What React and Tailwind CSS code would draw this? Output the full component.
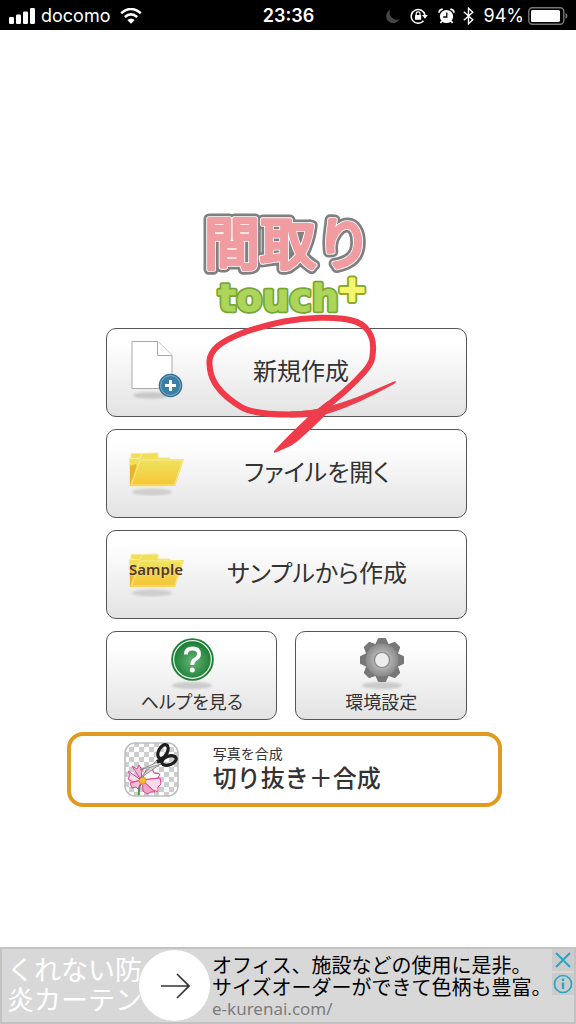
import React from "react";

const JP = "font-['Noto_Sans_CJK_JP',sans-serif]";
const PANEL =
  "rounded-[10px] border border-[#555555] bg-linear-to-b from-white from-15% to-[#e4e3e3] text-[#333333]";

function StatusBar() {
  return (
    <header className="grid h-[30px] grid-cols-[1fr_auto_1fr] items-center bg-black pt-[2px] pr-2 pl-[9px] font-['Inter',sans-serif] text-white">
      <div className="flex items-center gap-[6px]">
        <svg width="26" height="16" viewBox="0 0 26 16" fill="white" aria-label="Signal">
          <rect x="0" y="9" width="5" height="7" rx="1.2" />
          <rect x="7" y="6.500" width="5" height="9.500" rx="1.2" />
          <rect x="14" y="3.500" width="5" height="12.500" rx="1.2" />
          <rect x="21" y="0" width="5" height="16" rx="1.2" />
        </svg>
        <span className="text-lg leading-6">docomo</span>
        <svg className="ml-1" width="22" height="16" viewBox="0 0 22 16" aria-label="Wi-Fi">
          <path d="M1.200 5.200Q11-3.200 20.800 5.200" fill="none" stroke="white" strokeWidth="2.600" />
          <path d="M4.800 9Q11 3.600 17.200 9" fill="none" stroke="white" strokeWidth="2.600" />
          <path d="M11 15.800L7.300 12Q11 8.800 14.700 12Z" fill="white" />
        </svg>
      </div>
      <time className="text-lg leading-6 font-semibold">23:36</time>
      <div className="flex items-center justify-end">
        <svg className="mr-[10px]" width="15" height="15" viewBox="0 0 15 15" aria-label="Do not disturb">
          <path d="M5.200.8A7 7 0 1 0 14.400 10.300A7.200 7.200 0 0 1 5.200.8Z" fill="#454545" />
        </svg>
        <svg className="mr-[10px]" width="18" height="16" viewBox="0 0 18 16" aria-label="Rotation lock">
          <path d="M13.500 12.700A6.900 6.900 0 1 1 14.900 7" fill="none" stroke="white" strokeWidth="1.500" />
          <path d="M12 7h5.800L14.900 10.800Z" fill="white" />
          <rect x="5" y="7" width="6.200" height="4.800" rx=".6" fill="white" />
          <path d="M6.200 7.500V5.800a1.900 1.900 0 0 1 3.800 0v1.700" fill="none" stroke="white" strokeWidth="1.200" />
        </svg>
        <svg className="mr-2" width="17" height="16" viewBox="0 0 17 16" aria-label="Alarm">
          <circle cx="8.500" cy="8.500" r="6.600" fill="white" />
          <path d="M1 4.600Q1.300 1.500 4.700 1.100M12.300 1.100Q15.700 1.500 16 4.600" fill="none" stroke="white" strokeWidth="1.700" />
          <path d="M3.800 13l-1.300 2M13.200 13l1.300 2" stroke="white" strokeWidth="1.600" />
          <path d="M8.800 4.500V9H5.200" fill="none" stroke="black" strokeWidth="1.300" />
        </svg>
        <svg className="mr-[10px]" width="11" height="18" viewBox="0 0 11 18" aria-label="Bluetooth">
          <path d="M.8 4.800L9.800 12.800L5.500 16.800V1.200L9.800 5.200L.8 13.200" fill="none" stroke="white" strokeWidth="1.400" />
        </svg>
        <span className="mr-1 text-lg leading-6">94%</span>
        <svg width="40" height="18" viewBox="0 0 40 18" aria-label="Battery">
          <rect x=".8" y=".8" width="35" height="16.400" rx="3.500" fill="none" stroke="#777" strokeWidth="1.400" />
          <rect x="3" y="3" width="29" height="12" rx="1.500" fill="white" />
          <path d="M37.500 6q2 1 2 3t-2 3z" fill="#777" />
        </svg>
      </div>
    </header>
  );
}

function Logo() {
  return (
    <h1>
      <svg width="176" height="118" viewBox="198 204 176 118">
        <defs>
          <text id="logo-name" x="203" y="264" fontSize="56" fontWeight="400" className={JP}>
            間取り
          </text>
          <text id="logo-touch" x="217" y="311" fontSize="38" fontWeight="700" className="font-['DejaVu_Sans',sans-serif]">
            touch
          </text>
          <text id="logo-plus" x="336" y="301" fontSize="36" fontWeight="700" className="font-['DejaVu_Sans',sans-serif]">
            +
          </text>
        </defs>
        <g strokeLinejoin="round" strokeLinecap="round">
          <use href="#logo-name" fill="#808080" stroke="#808080" strokeWidth="11" />
          <use href="#logo-name" fill="#fff" stroke="#fff" strokeWidth="5.500" />
          <use href="#logo-name" fill="#f09ca0" stroke="#f09ca0" strokeWidth="3.800" />
          <use href="#logo-touch" fill="#75a536" stroke="#75a536" strokeWidth="4.400" />
          <use href="#logo-touch" fill="#add55a" stroke="#add55a" strokeWidth="1" />
          <use href="#logo-plus" fill="#8cab2b" stroke="#8cab2b" strokeWidth="6" />
          <use href="#logo-plus" fill="#f7f56b" stroke="#f7f56b" strokeWidth="2" />
        </g>
      </svg>
    </h1>
  );
}

function NewFileIcon() {
  return (
    <svg className="shrink-0" width="56" height="64" viewBox="0 6 56 64" aria-hidden="true">
      <defs>
        <filter id="soft" x="-20%" y="-60%" width="140%" height="220%">
          <feGaussianBlur stdDeviation="1" />
        </filter>
      </defs>
      <ellipse cx="23" cy="60.500" rx="18" ry="3.200" fill="#c8c8c8" filter="url(#soft)" />
      <path d="M4 6.500h26l14 14v33H4Z" fill="white" stroke="#aaa" />
      <path d="M29.500 6.500v14H44" fill="white" stroke="#aaa" />
      <circle cx="42.500" cy="50.500" r="11.800" fill="#2f7196" />
      <circle cx="42.500" cy="50.500" r="10" fill="#3b80a4" stroke="#9bc0d3" strokeWidth=".8" />
      <path d="M42.500 45v11M37 50.500h11" stroke="white" strokeWidth="3" />
    </svg>
  );
}

function FolderIcon({ label }) {
  return (
    <span className="relative flex shrink-0 items-center justify-center">
      <svg width="56" height="44" viewBox="0 0 56 44" aria-hidden="true">
        <defs>
          <linearGradient id="folder" x1="0" y1="0" x2="0" y2="1">
            <stop offset="0" stopColor="#efe360" />
            <stop offset="1" stopColor="#f6c535" />
          </linearGradient>
        </defs>
        <ellipse cx="24" cy="40" rx="20" ry="3.500" fill="#cecece" filter="url(#soft)" />
        <path d="M1.500 34V6.500H3V1.500H14L30 1V6H42V12L38 34Z" fill="#f0df57" stroke="#f5eb93" />
        <path d="M2 33V14L8 12L9 15Z" fill="#e8b42b" />
        <path d="M11 7H56L47 34H2Z" fill="url(#folder)" />
        <path d="M12 8H54.500L46.500 33H3.500Z" fill="none" stroke="#faec91" strokeWidth=".9" />
        <path d="M3 6.500h9l2-5" fill="none" stroke="#f8f0a0" />
      </svg>
      {label && (
        <span className="absolute top-[7px] font-['Noto_Sans',sans-serif] text-[15px] leading-[18px] font-semibold text-[#553529] [text-shadow:0_0_2px_#f7e98d]">
          {label}
        </span>
      )}
    </span>
  );
}

function HelpIcon() {
  return (
    <svg width="48" height="53" viewBox="0 0 48 53" aria-hidden="true">
      <defs>
        <radialGradient id="green" cx=".5" cy=".55" r=".5">
          <stop offset="0" stopColor="#69b476" />
          <stop offset="1" stopColor="#1d8038" />
        </radialGradient>
      </defs>
      <ellipse cx="24" cy="48.500" rx="20" ry="3.500" fill="#cbcbcb" filter="url(#soft)" />
      <circle cx="24.500" cy="22.500" r="21.300" fill="#1f7f3a" />
      <circle cx="24.500" cy="22.500" r="18.800" fill="url(#green)" stroke="#e6f3e8" strokeWidth="1.200" />
      <path d="M17.800 17.500Q18 11.500 24.500 11.500Q31 11.500 31 17Q31 20.300 27.500 22.200Q24.300 24 24.300 28" fill="none" stroke="white" strokeWidth="3.800" />
      <circle cx="24.300" cy="33" r="2.500" fill="white" />
    </svg>
  );
}

function GearIcon() {
  const teeth = [0, 45, 90, 135, 180, 225, 270, 315];
  return (
    <svg width="48" height="53" viewBox="0 0 48 53" aria-hidden="true">
      <defs>
        <radialGradient id="steel" gradientUnits="userSpaceOnUse" cx="25" cy="23" r="22">
          <stop offset=".3" stopColor="#b9b9b9" />
          <stop offset="1" stopColor="#6d6d6d" />
        </radialGradient>
      </defs>
      <ellipse cx="25" cy="48.500" rx="20" ry="3.500" fill="#cbcbcb" filter="url(#soft)" />
      {teeth.map((angle) => (
        <path key={angle} d="M17.500 9L21 1.500Q21.200 1 22 1H28Q28.800 1 29 1.500L32.500 9Z" fill="#777" transform={`rotate(${angle} 25 23)`} />
      ))}
      <circle cx="25" cy="23" r="16.500" fill="url(#steel)" />
      <circle cx="25" cy="23" r="7.500" fill="#ededed" stroke="#858585" strokeWidth="1.200" />
    </svg>
  );
}

function CutoutIcon() {
  return (
    <svg className="shrink-0" width="55" height="55" viewBox="0 0 55 55" aria-hidden="true">
      <defs>
        <pattern id="checker" width="10" height="10" patternUnits="userSpaceOnUse">
          <rect width="10" height="10" fill="#fff" />
          <path d="M0 0h5v5H0zM5 5h5v5H5z" fill="#cecece" />
        </pattern>
      </defs>
      <rect x="1" y="1" width="53" height="53" rx="10" fill="url(#checker)" stroke="#bdbdbd" strokeWidth="1.500" />
      <path d="M18 39Q14 46 15 53" fill="none" stroke="#3d9b48" strokeWidth="2" />
      <g stroke="#d9468e" strokeWidth="1" strokeLinejoin="round">
        <path d="M17 38L8 24L13 27L15 23L18 28Z" fill="#f6b5d4" />
        <path d="M17 38L4 29L6 33L4 37L9 40Z" fill="#fadbe9" />
        <path d="M18 38L6 41L8 46L12 45L14 47Z" fill="#f7bed8" />
        <path d="M18 38L22 28L28 27L30 31L36 32L34 36Z" fill="#fff" />
        <path d="M18 38L36 36L37 42L34 45L34 50L29 48Z" fill="#fbd7e7" />
        <path d="M18 38L31 50L27 50L23 52L19 49Z" fill="#f4a3ca" />
      </g>
      <circle cx="18.500" cy="38.500" r="3.500" fill="#f2bc2e" stroke="#de9724" />
      <path d="M15 37L34 17L38 21Z" fill="#d6d6d6" stroke="#707070" strokeWidth=".7" />
      <path d="M16 28L36 19L38 22Z" fill="#ededed" stroke="#707070" strokeWidth=".7" />
      <path d="M33 20L38 18" stroke="#1e1e1e" strokeWidth="4" />
      <ellipse cx="39" cy="9.500" rx="4.300" ry="7.500" fill="none" stroke="#1e1e1e" strokeWidth="3.200" transform="rotate(28 39 9.500)" />
      <ellipse cx="45" cy="18.500" rx="4.300" ry="7.500" fill="none" stroke="#1e1e1e" strokeWidth="3.200" transform="rotate(70 45 18.500)" />
    </svg>
  );
}

function HandMark() {
  return (
    <svg
      className="pointer-events-none absolute -top-[16px] left-[94px] z-10"
      width="200"
      height="146"
      viewBox="200 312 200 146"
      aria-hidden="true"
    >
      <path
        d="M316 414C334 401 352 386 365 371C373 361 372.500 358 373 350C374 336 367 324 352 320.500C335 316 305 317.500 284 321.500C262 326 238 333 222 343C208 352 208 362 211 374C215 389 228 399 241 407C252 413.500 270 414.500 290 414.500C303 414.500 316 413.500 328 410"
        fill="none"
        stroke="#f03a49"
        strokeWidth="6"
        strokeLinejoin="round"
        strokeLinecap="round"
      />
      <path d="M328 401C320 407 314 412 308 417C296 428 284 440 274 451Q273 454 277 452C286 448 292 446 299 440C309 431 319 422 333 407Z" fill="#ef3c4b" />
      <path d="M290 411.500C320 411.500 348 402 395 381Q397 382 394 384C370 397 350 407 330 413C315 417 302 417.500 290 417.500Z" fill="#ec3f4e" />
    </svg>
  );
}

function WideButton({ icon, inset, children }) {
  return (
    <button type="button" className={`flex h-[89px] w-full items-center pl-[21px] text-2xl ${PANEL}`}>
      {icon}
      <span className={`flex-1 pb-[5px] text-center [font-feature-settings:'palt'] ${inset}`}>{children}</span>
    </button>
  );
}

function SmallButton({ icon, children }) {
  return (
    <button type="button" className={`flex h-[89px] flex-col items-center pt-[5px] text-lg leading-[22px] ${PANEL}`}>
      {icon}
      <span className="[font-feature-settings:'palt']">{children}</span>
    </button>
  );
}

function AdBanner() {
  return (
    <footer className="relative flex h-[77px] items-center border-2 border-[#c3c3c3] bg-[#d8d8d8]">
      <a href="#ad" className="flex min-w-0 flex-1 items-center">
        <span className="w-[137px] shrink-0 pb-1 pl-[5px] text-[27px] leading-[30px] whitespace-nowrap text-white">
          くれない防
          <br />
          炎カーテン
        </span>
        <span className="relative flex size-[71px] shrink-0 items-center justify-center rounded-full bg-white">
          <svg width="30" height="28" viewBox="0 0 30 28" fill="none" stroke="#333" strokeWidth="1.600" aria-hidden="true">
            <path d="M1 14H29M17 2L29 14L17 26" />
          </svg>
        </span>
        <span className="flex flex-col pt-[2px] pl-[2px] whitespace-nowrap">
          <span className="text-xl leading-[22px] text-black">オフィス、施設などの使用に是非。</span>
          <span className="text-xl leading-[22px] text-black">サイズオーダーができて色柄も豊富。</span>
          <span className="font-['Noto_Sans',sans-serif] text-[17px] leading-[22px] text-[#7d7d7d]">e-kurenai.com/</span>
        </span>
      </a>
      <div className="absolute top-0 right-0 flex flex-col gap-[2px]">
        <button type="button" aria-label="閉じる" className="flex size-[22px] items-center justify-center bg-[#cccccc]">
          <svg width="16" height="16" viewBox="0 0 16 16" stroke="#2aa6c5" strokeWidth="2">
            <path d="M1 1L15 15M15 1L1 15" />
          </svg>
        </button>
        <button type="button" aria-label="広告情報" className="flex size-[22px] items-center justify-center bg-[#cccccc]">
          <svg width="20" height="20" viewBox="0 0 20 20" fill="none" stroke="#2aa6c5">
            <circle cx="10" cy="10" r="8.500" strokeWidth="1.700" />
            <path d="M10 8.500V15" strokeWidth="2.400" />
            <path d="M10 4.500V7" strokeWidth="2.400" />
          </svg>
        </button>
      </div>
    </footer>
  );
}

export default function App() {
  return (
    <div className={`flex min-h-screen flex-col bg-white ${JP}`}>
      <StatusBar />
      <main className="flex flex-1 flex-col items-center pt-[174px] pr-[3px] pb-8">
        <Logo />
        <nav className="mt-[6px] flex w-[63%] flex-col gap-3">
          <div className="relative">
            <WideButton icon={<NewFileIcon />} inset="pr-12">新規作成</WideButton>
            <HandMark />
          </div>
          <WideButton icon={<FolderIcon />} inset="pr-4">ファイルを開く</WideButton>
          <WideButton icon={<FolderIcon label="Sample" />} inset="pr-4">サンプルから作成</WideButton>
          <div className="grid grid-cols-2 gap-[18px]">
            <SmallButton icon={<HelpIcon />}>ヘルプを見る</SmallButton>
            <SmallButton icon={<GearIcon />}>環境設定</SmallButton>
          </div>
        </nav>
        <button
          type="button"
          className="mt-3 mr-1 flex h-[75px] w-[76%] items-center gap-[34px] rounded-2xl border-4 border-[#e09a22] bg-white pl-[53px] text-left text-[#333333]"
        >
          <CutoutIcon />
          <span className="flex flex-col pb-[3px]">
            <span className="text-sm leading-[18px]">写真を合成</span>
            <span className="text-2xl leading-[30px] font-medium">切り抜き＋合成</span>
          </span>
        </button>
      </main>
      <AdBanner />
    </div>
  );
}
